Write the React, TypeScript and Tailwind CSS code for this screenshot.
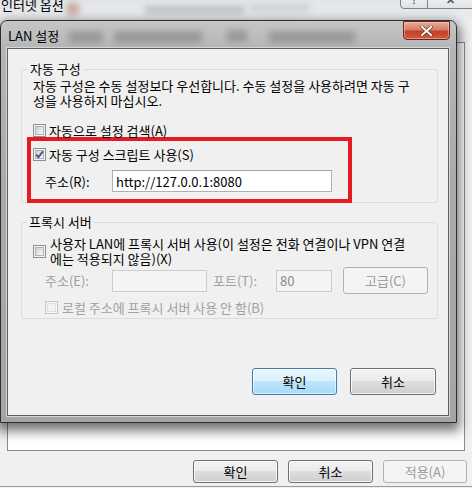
import React from "react";

const F = "font-['Noto_Sans_CJK_KR','Noto_Sans',sans-serif]";

function Check({ checked = false, disabled = false }: { checked?: boolean; disabled?: boolean }) {
  return (
    <span
      className={`relative flex h-[13px] w-[13px] shrink-0 items-center justify-center border ${
        disabled ? "border-[#c4c6c8] bg-[#f7f7f7]" : "border-[#8e8f8f] bg-[#f4f4f4]"
      }`}
    >
      <span
        className={`h-[9px] w-[9px] border ${
          disabled
            ? "border-[#dedede] bg-[#f2f2f2]"
            : "border-[#aeb3b9] bg-[linear-gradient(135deg,#cbcfd5,#f7f7f7)]"
        }`}
      />
      {checked && (
        <svg className="absolute left-[0px] top-[0px]" width="11" height="11" viewBox="0 0 11 11">
          <path d="M2.2 5.6 L4.4 8.2 L9 2.4" fill="none" stroke="#4a5a8e" strokeWidth="1.9" />
        </svg>
      )}
    </span>
  );
}

function Btn({
  label,
  kind = "normal",
  w,
  h,
}: {
  label: string;
  kind?: "normal" | "primary" | "disabled";
  w: string;
  h: string;
}) {
  const styles = {
    normal:
      "border-[#707070] bg-[linear-gradient(180deg,#f2f2f2_0%,#ebebeb_50%,#dddddd_50%,#cfcfcf_100%)] shadow-[inset_0_0_0_1px_rgba(255,255,255,0.75)] text-black",
    primary:
      "border-[#3c7fb1] bg-[linear-gradient(180deg,#eaf6fd_0%,#d9f0fc_50%,#bee6fd_50%,#a7d9f5_100%)] shadow-[inset_0_0_0_1px_rgba(255,255,255,0.6)] text-black",
    disabled: "border-[#adb2b5] bg-[#f4f4f4] text-[#9a9a9a]",
  } as const;
  return (
    <div className={`flex shrink-0 items-center justify-center rounded-[3px] border ${styles[kind]} ${w} ${h}`}>
      {label}
    </div>
  );
}

export default function App() {
  return (
    <div className={`relative h-[488px] w-[472px] overflow-hidden bg-[#f0f0f0] text-[13px] leading-[15px] text-black ${F}`}>
      {/* parent window title glass */}
      <div className="relative flex h-[22px] items-start justify-between overflow-hidden bg-[linear-gradient(180deg,#e2e5e8,#eceef0)]">
        <div className="absolute left-[66px] top-[2px] h-[14px] w-[14px] rounded-full bg-[#b07060]/50 blur-[3px]" />
        <div className="absolute left-[145px] top-[6px] h-[8px] w-[100px] bg-[#9a9a9a]/50 blur-[3px]" />
        <div className="absolute left-[250px] top-[4px] h-[8px] w-[60px] bg-[#bbbbbb]/50 blur-[3px]" />
        <span className="relative mt-[-3px] pl-[1px]">인터넷 옵션</span>
        <div className="relative mr-[-1px] mt-[-7px] flex">
          <div className="flex h-[16px] w-[28px] items-end justify-center rounded-bl-[4px] border border-[#7f8388] bg-[linear-gradient(180deg,#f4f5f6,#dfe2e5)] pb-[3px] text-[11px] leading-[11px] text-[#444]">
            ?
          </div>
          <div className="flex h-[16px] w-[45px] items-end justify-center border border-l-0 border-[#7f8388] bg-[linear-gradient(180deg,#f4f5f6,#dfe2e5)] pb-[4px] text-[11px] font-bold leading-[10px] text-[#555]">
            ✕
          </div>
        </div>
      </div>

      {/* parent content */}
      <div className="px-[7px]">
        <div className="mt-[20px] h-[409px] w-[458px] border border-[#898c95] bg-white" />
      </div>
      <div className="mt-[9px] flex justify-end gap-[10px] pr-[5px]">
        <Btn label="확인" w="w-[85px]" h="h-[23px]" />
        <Btn label="취소" w="w-[85px]" h="h-[23px]" />
        <Btn label="적용(A)" kind="disabled" w="w-[84px]" h="h-[23px]" />
      </div>
      <div className="mt-[3px] h-[1px] bg-[#9c9c9c]" />

      {/* LAN dialog window */}
      <div className="absolute left-0 top-[20px] flex h-[403px] w-[457px] flex-col rounded-t-[7px] border border-[#2e2e2e] bg-[linear-gradient(180deg,#c4c6c8_0%,#b3b5b7_7%,#a8aaac_40%,#a3a5a7_100%)] shadow-[0_5px_12px_3px_rgba(0,0,0,0.55)]">
        {/* title bar */}
        <div className="relative flex h-[27px] items-start pl-[7px] pr-[6px]">
          <div className="absolute left-[68px] top-[10px] h-[12px] w-[34px] bg-[#6f6f6f]/45 blur-[3px]" />
          <div className="absolute left-[113px] top-[10px] h-[12px] w-[88px] bg-[#6f6f6f]/45 blur-[3px]" />
          <div className="absolute left-[226px] top-[9px] h-[12px] w-[20px] bg-[#6f6f6f]/45 blur-[3px]" />
          <div className="absolute left-[268px] top-[10px] h-[12px] w-[86px] bg-[#6f6f6f]/45 blur-[3px]" />
          <span className="relative mt-[7px]">LAN 설정</span>
          <div className="relative ml-auto flex h-[19px] w-[47px] items-center justify-center rounded-b-[4px] border border-[#6b2618] bg-[linear-gradient(180deg,#e9a99a_0%,#d47e68_45%,#c2412a_55%,#d05a3f_100%)] shadow-[inset_0_0_0_1px_rgba(255,220,210,0.45)]">
            <svg width="13" height="10" viewBox="0 0 13 10">
              <path d="M2 1 L11 9 M11 1 L2 9" stroke="#5a2a22" strokeWidth="3.2" strokeLinecap="square" />
              <path d="M2 1 L11 9 M11 1 L2 9" stroke="#ffffff" strokeWidth="2" strokeLinecap="square" />
            </svg>
          </div>
        </div>

        {/* client area */}
        <div className="mb-[6px] ml-[6px] mr-[7px] flex flex-1 flex-col border border-[#5f5f5f] bg-[#f0f0f0] pl-[13px] pt-[20px] shadow-[0_0_0_1px_#d6d6d6]">
          {/* group 1 */}
          <div className="relative w-[417px] rounded-[3px] border border-[#d5dfe5] pl-[11px] pt-[8px]">
            <span className="absolute left-[6px] top-[-9px] bg-[#f0f0f0] px-[2px]">자동 구성</span>
            <div className="whitespace-nowrap">
              자동 구성은 수동 설정보다 우선합니다. 수동 설정을 사용하려면 자동 구
              <br />
              성을 사용하지 마십시오.
            </div>
            <div className="mt-[15px] flex h-[14px] items-center gap-[3px]">
              <Check />
              <span>자동으로 설정 검색(A)</span>
            </div>
            <div className="mb-[-1px] ml-[-6px] w-[325px] border-[4px] border-[#e51b24] pb-[7px] pl-[2px] pt-[7px]">
              <div className="flex h-[13px] items-center gap-[3px]">
                <Check checked />
                <span>자동 구성 스크립트 사용(S)</span>
              </div>
              <div className="mt-[9px] flex items-center">
                <span className="ml-[12px] w-[67px]">주소(R):</span>
                <div className="flex h-[22px] w-[220px] items-center border border-[#a9b1bc] border-t-[#9ba3ad] bg-white pl-[3px]">
                  http://127.0.0.1:8080
                </div>
              </div>
            </div>
          </div>

          {/* group 2 */}
          <div className="relative mt-[19px] w-[417px] rounded-[3px] border border-[#d5dfe5] pb-[4px] pl-[11px] pt-[13px]">
            <span className="absolute left-[5px] top-[-9px] bg-[#f0f0f0] px-[2px]">프록시 서버</span>
            <div className="flex items-center gap-[4px]">
              <Check />
              <span className="whitespace-nowrap">
                사용자 LAN에 프록시 서버 사용(이 설정은 전화 연결이나 VPN 연결
                <br />
                에는 적용되지 않음)(X)
              </span>
            </div>
            <div className="mt-[1px] flex h-[27px] items-center text-[#a0a0a0]">
              <span className="ml-[12px] w-[67px]">주소(E):</span>
              <div className="h-[22px] w-[95px] border border-[#c9cdd1] bg-[#f4f4f4]" />
              <span className="ml-[6px] w-[63px]">포트(T):</span>
              <div className="flex h-[22px] w-[56px] items-center border border-[#c9cdd1] bg-[#f4f4f4] pl-[3px] text-[#8a8a8a]">
                80
              </div>
              <div className="ml-[11px]">
                <Btn label="고급(C)" kind="disabled" w="w-[85px]" h="h-[27px]" />
              </div>
            </div>
            <div className="ml-[12px] mt-[7px] flex h-[13px] items-center gap-[4px] text-[#a0a0a0]">
              <Check disabled />
              <span>로컬 주소에 프록시 서버 사용 안 함(B)</span>
            </div>
          </div>

          {/* dialog buttons */}
          <div className="mt-[49px] flex justify-end gap-[13px] pr-[12px]">
            <Btn label="확인" kind="primary" w="w-[85px]" h="h-[27px]" />
            <Btn label="취소" w="w-[86px]" h="h-[27px]" />
          </div>
        </div>
      </div>
    </div>
  );
}
